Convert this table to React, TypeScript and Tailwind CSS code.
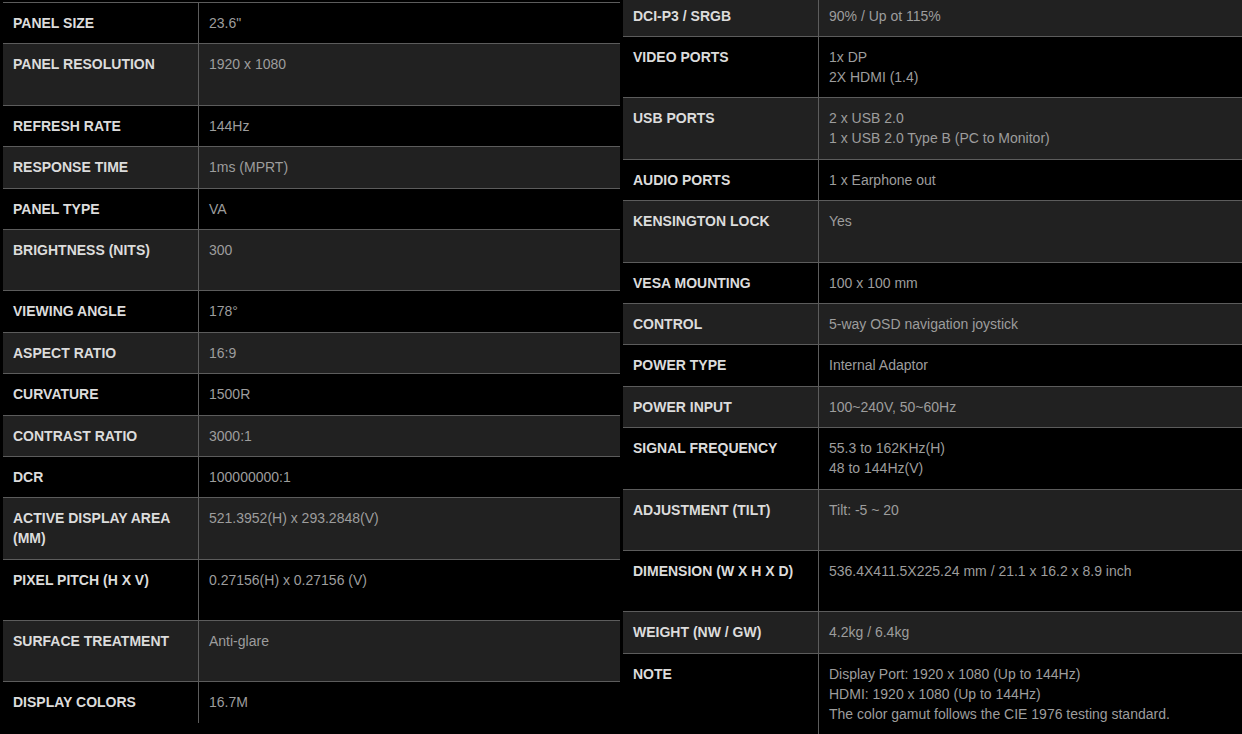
import React from "react";

type Spec = { label: string; value: string[]; tall?: boolean };

const leftSpecs: Spec[] = [
  { label: "PANEL SIZE", value: ["23.6\""] },
  { label: "PANEL RESOLUTION", value: ["1920 x 1080"], tall: true },
  { label: "REFRESH RATE", value: ["144Hz"] },
  { label: "RESPONSE TIME", value: ["1ms (MPRT)"] },
  { label: "PANEL TYPE", value: ["VA"] },
  { label: "BRIGHTNESS (NITS)", value: ["300"], tall: true },
  { label: "VIEWING ANGLE", value: ["178°"] },
  { label: "ASPECT RATIO", value: ["16:9"] },
  { label: "CURVATURE", value: ["1500R"] },
  { label: "CONTRAST RATIO", value: ["3000:1"] },
  { label: "DCR", value: ["100000000:1"] },
  { label: "ACTIVE DISPLAY AREA (MM)", value: ["521.3952(H) x 293.2848(V)"], tall: true },
  { label: "PIXEL PITCH (H X V)", value: ["0.27156(H) x 0.27156 (V)"], tall: true },
  { label: "SURFACE TREATMENT", value: ["Anti-glare"], tall: true },
  { label: "DISPLAY COLORS", value: ["16.7M"] },
];

const rightSpecs: Spec[] = [
  { label: "DCI-P3 / SRGB", value: ["90% / Up ot 115%"] },
  { label: "VIDEO PORTS", value: ["1x DP", "2X HDMI (1.4)"], tall: true },
  { label: "USB PORTS", value: ["2 x USB 2.0", "1 x USB 2.0 Type B (PC to Monitor)"], tall: true },
  { label: "AUDIO PORTS", value: ["1 x Earphone out"] },
  { label: "KENSINGTON LOCK", value: ["Yes"], tall: true },
  { label: "VESA MOUNTING", value: ["100 x 100 mm"] },
  { label: "CONTROL", value: ["5-way OSD navigation joystick"] },
  { label: "POWER TYPE", value: ["Internal Adaptor"] },
  { label: "POWER INPUT", value: ["100~240V, 50~60Hz"] },
  { label: "SIGNAL FREQUENCY", value: ["55.3 to 162KHz(H)", "48 to 144Hz(V)"], tall: true },
  { label: "ADJUSTMENT (TILT)", value: ["Tilt: -5 ~ 20"], tall: true },
  { label: "DIMENSION (W X H X D)", value: ["536.4X411.5X225.24 mm / 21.1 x 16.2 x 8.9 inch"], tall: true },
  { label: "WEIGHT (NW / GW)", value: ["4.2kg / 6.4kg"] },
  {
    label: "NOTE",
    value: [
      "Display Port: 1920 x 1080 (Up to 144Hz)",
      "HDMI: 1920 x 1080 (Up to 144Hz)",
      "The color gamut follows the CIE 1976 testing standard.",
    ],
  },
];

function SpecTable({ specs, startGray }: { specs: Spec[]; startGray: boolean }) {
  return (
    <div className="flex flex-col">
      {specs.map((s, i) => {
        const gray = startGray ? i % 2 === 0 : i % 2 === 1;
        return (
          <div
            key={s.label}
            className={`grid grid-cols-[195px_1fr] border-t border-[#5c5c5c] ${
              gray ? "bg-[#212121]" : "bg-black"
            } ${s.tall ? "min-h-[61.4px]" : "min-h-[41.4px]"}`}
          >
            {/* label */}
            <div className="pl-[10px] pr-[10px] pt-[10px] pb-[10.4px] text-[14px] leading-[20px] font-bold text-[#dcdcdc]">
              {s.label}
            </div>
            {/* value */}
            <div className="border-l border-[#5c5c5c] pl-[10px] pr-[10px] pt-[10px] pb-[10.4px] text-[14px] leading-[20px] text-[#9d9d9d]">
              {s.value.map((v) => (
                <div key={v} className="whitespace-nowrap">{v}</div>
              ))}
            </div>
          </div>
        );
      })}
    </div>
  );
}

export default function App() {
  return (
    <div
      className="w-[1242px] h-[734px] overflow-hidden bg-black flex"
      style={{ fontFamily: '"Liberation Sans", Arial, sans-serif' }}
    >
      <div className="ml-[3px] mt-[2px] w-[617px] shrink-0">
        <SpecTable specs={leftSpecs} startGray={false} />
      </div>
      <div className="ml-[3px] mt-[-5.4px] flex-1">
        <SpecTable specs={rightSpecs} startGray={true} />
      </div>
    </div>
  );
}
